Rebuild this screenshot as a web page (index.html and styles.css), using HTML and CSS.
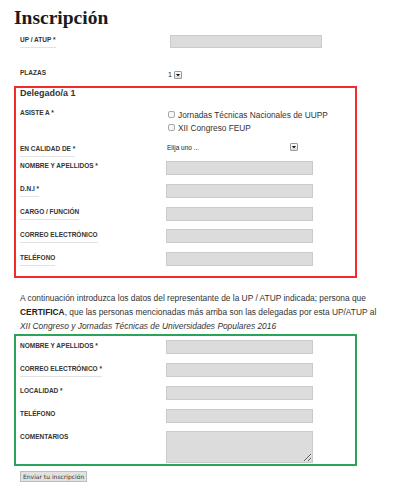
FILE: index.html
```html
<!DOCTYPE html>
<html lang="es">
<head>
<meta charset="utf-8">
<title>Inscripción</title>
<link rel="stylesheet" href="styles.css">
</head>
<body>
<div class="page">
  <h1 class="title">Inscripción</h1>
  <form class="form">
    <div class="row row-out row-up">
      <label class="lbl ul">UP / ATUP *</label>
      <input class="field field-wide" type="text">
    </div>
    <div class="row row-out row-plazas">
      <label class="lbl">PLAZAS</label>
      <div class="select select-small"><span class="sel-text">1</span><span class="sel-btn"><svg width="6" height="6" viewBox="0 0 6 6"><polygon points="1,2 5,2 3,4.5" fill="#111"/></svg></span></div>
    </div>

    <div class="box box-red">
      <div class="legend">Delegado/a 1</div>
      <div class="row row-asiste">
        <label class="lbl">ASISTE A *</label>
        <div class="checks">
          <label class="check"><span class="cb"></span>Jornadas Técnicas Nacionales de UUPP</label>
          <label class="check"><span class="cb"></span>XII Congreso FEUP</label>
        </div>
      </div>
      <div class="row row-calidad">
        <label class="lbl ul">EN CALIDAD DE *</label>
        <div class="select select-wide"><span class="sel-text">Elija uno ...</span><span class="sel-btn"><svg width="6" height="6" viewBox="0 0 6 6"><polygon points="1,2 5,2 3,4.5" fill="#111"/></svg></span></div>
      </div>
      <div class="row row-in">
        <label class="lbl">NOMBRE Y APELLIDOS *</label>
        <input class="field" type="text">
      </div>
      <div class="row row-in">
        <label class="lbl ul">D.N.I *</label>
        <input class="field" type="text">
      </div>
      <div class="row row-in">
        <label class="lbl ul">CARGO / FUNCIÓN</label>
        <input class="field" type="text">
      </div>
      <div class="row row-in">
        <label class="lbl ul">CORREO ELECTRÓNICO</label>
        <input class="field" type="text">
      </div>
      <div class="row row-in">
        <label class="lbl ul">TELÉFONO</label>
        <input class="field" type="text">
      </div>
    </div>

    <p class="intro">A continuación introduzca los datos del representante de la UP / ATUP indicada; persona que<br><b>CERTIFICA</b>, que las personas mencionadas más arriba son las delegadas por esta UP/ATUP al<br><i>XII Congreso y Jornadas Técnicas de Universidades Populares 2016</i></p>

    <div class="box box-green">
      <div class="row row-in2">
        <label class="lbl">NOMBRE Y APELLIDOS *</label>
        <input class="field" type="text">
      </div>
      <div class="row row-in2">
        <label class="lbl ul">CORREO ELECTRÓNICO *</label>
        <input class="field" type="text">
      </div>
      <div class="row row-in2">
        <label class="lbl">LOCALIDAD *</label>
        <input class="field" type="text">
      </div>
      <div class="row row-in2">
        <label class="lbl">TELÉFONO</label>
        <input class="field" type="text">
      </div>
      <div class="row row-com">
        <label class="lbl">COMENTARIOS</label>
        <textarea class="field field-area"></textarea>
      </div>
    </div>

    <button class="submit" type="button">Enviar tu inscripción</button>
  </form>
</div>
</body>
</html>
```

FILE: styles.css
```css
html, body {
  margin: 0;
  padding: 0;
  background: #fff;
}
body {
  font-family: "Liberation Sans", Arial, sans-serif;
  color: #333;
}
.page {
  padding-left: 14px;
  width: 386px;
}
.title {
  margin: 0;
  padding-top: 7px;
  font-family: "Liberation Serif", "Times New Roman", serif;
  font-size: 19.5px;
  line-height: 22px;
  font-weight: bold;
  color: #1a1a1a;
}
.form {
  margin: 0;
}
.row {
  display: grid;
  grid-template-columns: 146px auto;
  justify-content: start;
  justify-items: start;
  align-items: center;
}
.row-out {
  grid-template-columns: 150px auto;
  padding-left: 6px;
}
.lbl {
  display: block;
  font-size: 6.5px;
  line-height: 10px;
  font-weight: bold;
  text-transform: uppercase;
  color: #333;
  padding-bottom: 2px;
  border-bottom: 1px solid transparent;
}
.lbl.ul {
  border-bottom-color: #e2e2e2;
}
.row-up {
  height: 25px;
}
.row-plazas {
  height: 12px;
  margin-top: 14px;
  margin-bottom: 6px;
}
.field {
  display: block;
  box-sizing: border-box;
  width: 147px;
  height: 14px;
  margin: 0;
  padding: 0 3px;
  background: #dcdcdc;
  border: 1px solid #cbcbcb;
  border-radius: 0;
  font-size: 8px;
  font-family: inherit;
}
.field-wide {
  width: 152px;
  height: 13px;
}
.field-area {
  height: 32px;
  resize: both;
}
.select {
  display: flex;
  align-items: center;
  height: 10px;
  font-size: 6.5px;
  color: #222;
}
.select-small {
  margin-left: -2px;
}
.select-small .sel-text {
  width: 6px;
  font-size: 7px;
}
.select-wide {
  width: 131px;
  margin-left: 1px;
  margin-top: 8px;
}
.select-wide .sel-text {
  flex: 1;
}
.sel-btn {
  box-sizing: border-box;
  width: 8px;
  height: 8px;
  display: flex;
  align-items: center;
  justify-content: center;
  background: linear-gradient(#fafafa, #dedede);
  border: 1px solid #9a9a9a;
  border-radius: 1px;
}
.sel-btn svg {
  display: block;
}
.box {
  box-sizing: border-box;
  width: 343px;
  padding: 0 0 0 4px;
}
.box-red {
  border: 2px solid #f12b2b;
  padding-bottom: 5.4px;
}
.legend {
  font-size: 9px;
  line-height: 11px;
  font-weight: bold;
  color: #333;
}
.row-asiste {
  align-items: start;
  margin-top: 9px;
}
.checks {
  margin-left: 2px;
}
.check {
  display: flex;
  align-items: center;
  height: 13px;
  font-size: 8.3px;
  color: #333;
}
.cb {
  box-sizing: border-box;
  width: 7px;
  height: 7px;
  border: 1px solid #a8a8a8;
  border-radius: 2px;
  background: #f7f7f7;
  margin-right: 3px;
}
.row-calidad {
  height: 22.6px;
  align-items: start;
}
.row-calidad .lbl {
  margin-top: 10px;
}
.row-in {
  height: 22.8px;
}
.intro {
  margin: 13px 0 1px 6px;
  font-size: 8.4px;
  line-height: 14px;
  color: #333;
  white-space: nowrap;
}
.intro b {
  color: #222;
}
.box-green {
  border: 2px solid #2aa45a;
  padding-bottom: 1px;
}
.row-in2 {
  height: 22.75px;
}
.row-com {
  align-items: start;
  padding-top: 4px;
}
.row-com .lbl {
  margin-top: 1px;
}
.submit {
  display: block;
  margin: 5px 0 0 6px;
  height: 11px;
  padding: 0 2px;
  font-family: "DejaVu Sans", sans-serif;
  font-size: 6px;
  line-height: 9px;
  color: #333;
  background: #e2e2e2;
  border: 1px solid #bcbcbc;
  border-radius: 0;
}
```
